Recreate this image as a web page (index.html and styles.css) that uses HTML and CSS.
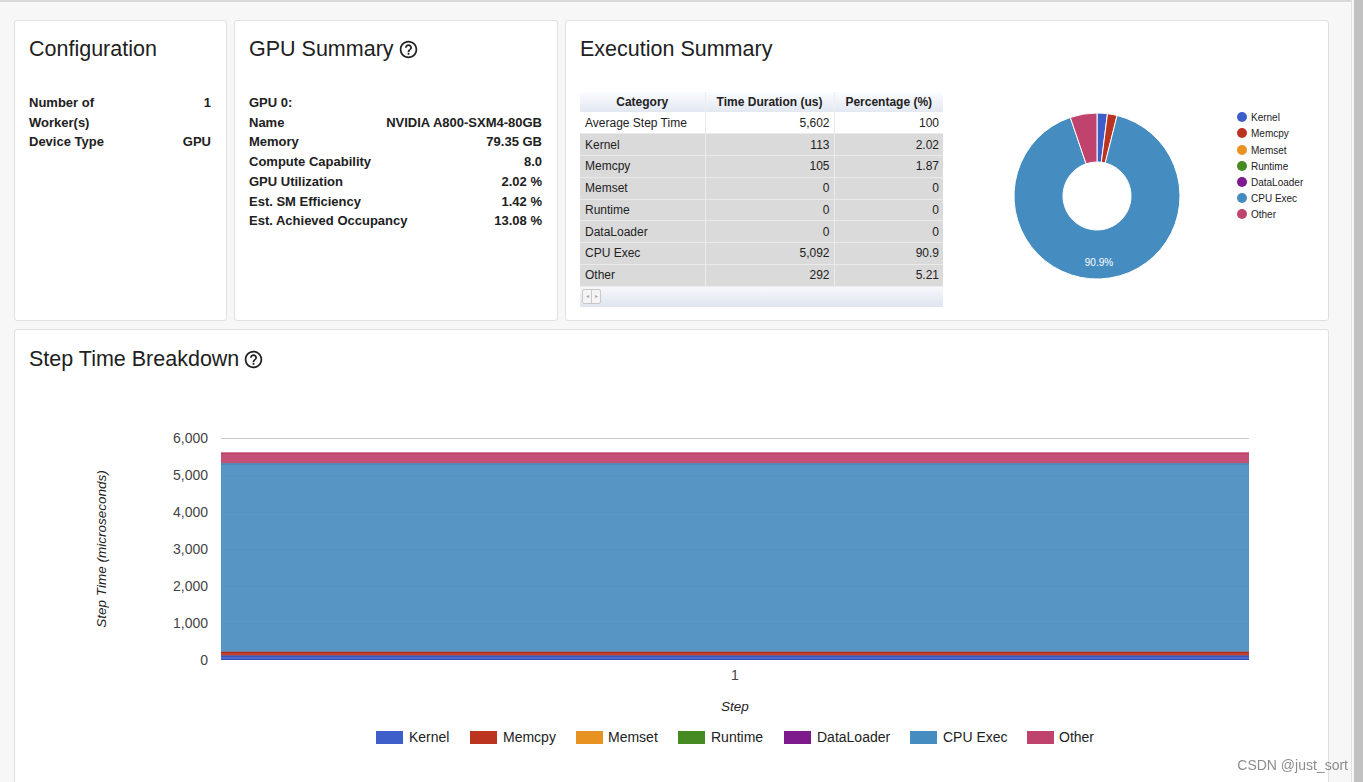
FILE: index.html
```html
<!DOCTYPE html>
<html lang="en">
<head>
<meta charset="utf-8">
<title>Overview</title>
<link rel="stylesheet" href="styles.css">
</head>
<body>
<div class="app">
  <main class="page">
    <div class="row-top">
      <section class="card card-config">
        <h2 class="card-title">Configuration</h2>
        <div class="kv">
          <div class="kv-row"><span class="k k-narrow">Number of Worker(s)</span><span class="v">1</span></div>
          <div class="kv-row"><span class="k">Device Type</span><span class="v">GPU</span></div>
        </div>
      </section>

      <section class="card card-gpu">
        <h2 class="card-title">GPU Summary<svg class="help" viewBox="0 0 24 24"><path d="M11 18h2v-2h-2v2zm1-16C6.48 2 2 6.48 2 12s4.48 10 10 10 10-4.48 10-10S17.52 2 12 2zm0 18c-4.41 0-8-3.59-8-8s3.59-8 8-8 8 3.59 8 8-3.59 8-8 8zm0-14c-2.21 0-4 1.79-4 4h2c0-1.1.9-2 2-2s2 .9 2 2c0 2-3 1.75-3 5h2c0-2.25 3-2.5 3-5 0-2.21-1.79-4-4-4z"/></svg></h2>
        <div class="kv">
          <div class="kv-row"><span class="k">GPU 0:</span><span class="v"></span></div>
          <div class="kv-row"><span class="k">Name</span><span class="v">NVIDIA A800-SXM4-80GB</span></div>
          <div class="kv-row"><span class="k">Memory</span><span class="v">79.35 GB</span></div>
          <div class="kv-row"><span class="k">Compute Capability</span><span class="v">8.0</span></div>
          <div class="kv-row"><span class="k">GPU Utilization</span><span class="v">2.02 %</span></div>
          <div class="kv-row"><span class="k">Est. SM Efficiency</span><span class="v">1.42 %</span></div>
          <div class="kv-row"><span class="k">Est. Achieved Occupancy</span><span class="v">13.08 %</span></div>
        </div>
      </section>

      <section class="card card-exec">
        <h2 class="card-title">Execution Summary</h2>
        <div class="exec-body">
          <div class="gtable">
            <table class="gt">
              <thead>
                <tr><th class="c1">Category</th><th class="c2">Time Duration (us)</th><th class="c3">Percentage (%)</th></tr>
              </thead>
              <tbody>
                <tr class="first"><td>Average Step Time</td><td class="num">5,602</td><td class="num">100</td></tr>
                <tr><td>Kernel</td><td class="num">113</td><td class="num">2.02</td></tr>
                <tr><td>Memcpy</td><td class="num">105</td><td class="num">1.87</td></tr>
                <tr><td>Memset</td><td class="num">0</td><td class="num">0</td></tr>
                <tr><td>Runtime</td><td class="num">0</td><td class="num">0</td></tr>
                <tr><td>DataLoader</td><td class="num">0</td><td class="num">0</td></tr>
                <tr><td>CPU Exec</td><td class="num">5,092</td><td class="num">90.9</td></tr>
                <tr><td>Other</td><td class="num">292</td><td class="num">5.21</td></tr>
              </tbody>
            </table>
            <div class="gt-footer">
              <div class="pager"><span class="pg-btn">&#9666;</span><span class="pg-btn">&#9656;</span></div>
            </div>
          </div>
          <svg class="pie" width="380" height="230" viewBox="0 0 380 230">
            <g transform="translate(154,104)" stroke="#fff" stroke-width="1">
              <path fill="#3e5fc9" d="M0,-83 A83,83 0 0 1 10.49,-82.33 L4.30,-33.73 A34,34 0 0 0 0,-34 Z"/>
              <path fill="#bb3420" d="M10.49,-82.33 A83,83 0 0 1 20.09,-80.53 L8.23,-32.99 A34,34 0 0 0 4.30,-33.73 Z"/>
              <path fill="#458dc0" d="M20.09,-80.53 A83,83 0 1 1 -26.70,-78.59 L-10.94,-32.19 A34,34 0 1 0 8.23,-32.99 Z"/>
              <path fill="#c0436e" d="M-26.70,-78.59 A83,83 0 0 1 0,-83 L0,-34 A34,34 0 0 0 -10.94,-32.19 Z"/>
            </g>
            <text class="pie-label" x="156" y="173.5">90.9%</text>
            <g class="pie-legend">
              <circle cx="299" cy="25" r="5" fill="#3e5fc9"/><text x="308" y="28.5">Kernel</text>
              <circle cx="299" cy="41" r="5" fill="#bb3420"/><text x="308" y="44.5">Memcpy</text>
              <circle cx="299" cy="58" r="5" fill="#e89222"/><text x="308" y="61.5">Memset</text>
              <circle cx="299" cy="74" r="5" fill="#468a22"/><text x="308" y="77.5">Runtime</text>
              <circle cx="299" cy="90" r="5" fill="#7d1a8c"/><text x="308" y="93.5">DataLoader</text>
              <circle cx="299" cy="106" r="5" fill="#458dc0"/><text x="308" y="109.5">CPU Exec</text>
              <circle cx="299" cy="122" r="5" fill="#c0436e"/><text x="308" y="125.5">Other</text>
            </g>
          </svg>
        </div>
      </section>
    </div>

    <section class="card card-step">
      <h2 class="card-title">Step Time Breakdown<svg class="help" viewBox="0 0 24 24"><path d="M11 18h2v-2h-2v2zm1-16C6.48 2 2 6.48 2 12s4.48 10 10 10 10-4.48 10-10S17.52 2 12 2zm0 18c-4.41 0-8-3.59-8-8s3.59-8 8-8 8 3.59 8 8-3.59 8-8 8zm0-14c-2.21 0-4 1.79-4 4h2c0-1.1.9-2 2-2s2 .9 2 2c0 2-3 1.75-3 5h2c0-2.25 3-2.5 3-5 0-2.21-1.79-4-4-4z"/></svg></h2>
      <svg class="step-chart" width="1284" height="400" viewBox="0 0 1284 400">
        <g class="grid" stroke="#cccccc" stroke-width="1">
          <line x1="192" y1="58.5" x2="1220" y2="58.5"/>
          <line x1="192" y1="95.5" x2="1220" y2="95.5"/>
          <line x1="192" y1="132.5" x2="1220" y2="132.5"/>
          <line x1="192" y1="169.5" x2="1220" y2="169.5"/>
          <line x1="192" y1="206.5" x2="1220" y2="206.5"/>
          <line x1="192" y1="243.5" x2="1220" y2="243.5"/>
        </g>
        <g fill-opacity="0.93">
          <rect x="192" y="72.7" width="1028" height="10.8" fill="#c0436e"/>
          <rect x="192" y="83.5" width="1028" height="188.4" fill="#4a8dc0"/>
          <rect x="192" y="271.9" width="1028" height="3.9" fill="#bb3420"/>
          <rect x="192" y="275.8" width="1028" height="4.2" fill="#3e5fc9"/>
        </g>
        <g stroke-width="1.2" fill="none">
          <line x1="192" y1="73.2" x2="1220" y2="73.2" stroke="#b83a66"/>
          <line x1="192" y1="83.8" x2="1220" y2="83.8" stroke="#3f80b4"/>
          <line x1="192" y1="272.3" x2="1220" y2="272.3" stroke="#a82d1a"/>
          <line x1="192" y1="276.2" x2="1220" y2="276.2" stroke="#3452b5"/>
          <line x1="192" y1="279.5" x2="1220" y2="279.5" stroke="#3452b5"/>
        </g>
        <g class="ylabels">
          <text x="179" y="63">6,000</text>
          <text x="179" y="100">5,000</text>
          <text x="179" y="137">4,000</text>
          <text x="179" y="174">3,000</text>
          <text x="179" y="211">2,000</text>
          <text x="179" y="248">1,000</text>
          <text x="179" y="285">0</text>
        </g>
        <text class="xlabel" x="706" y="300">1</text>
        <text class="axis-title" x="706" y="331">Step</text>
        <text class="axis-title" transform="translate(77,169) rotate(-90)">Step Time (microseconds)</text>
        <g class="legend">
          <rect x="347" y="351" width="27" height="13" fill="#3e5fc9"/><text x="380" y="362">Kernel</text>
          <rect x="441" y="351" width="27" height="13" fill="#bb3420"/><text x="474" y="362">Memcpy</text>
          <rect x="547" y="351" width="27" height="13" fill="#e89222"/><text x="579" y="362">Memset</text>
          <rect x="649" y="351" width="27" height="13" fill="#468a22"/><text x="682" y="362">Runtime</text>
          <rect x="755" y="351" width="27" height="13" fill="#7d1a8c"/><text x="788" y="362">DataLoader</text>
          <rect x="881" y="351" width="27" height="13" fill="#458dc0"/><text x="914" y="362">CPU Exec</text>
          <rect x="998" y="351" width="27" height="13" fill="#c0436e"/><text x="1030" y="362">Other</text>
        </g>
      </svg>
    </section>
  </main>
  <div class="scrollbar"><div class="scroll-thumb"></div></div>
</div>
<div class="watermark">CSDN @just_sort</div>
</body>
</html>
```

FILE: styles.css
```css
html, body {
  margin: 0;
  padding: 0;
  height: 100%;
}

body {
  font-family: "Liberation Sans", Arial, Helvetica, sans-serif;
  background: #f7f7f7;
  color: #212121;
  overflow: hidden;
}

.app {
  display: flex;
  height: 782px;
  box-sizing: border-box;
  border-top: 2px solid #d9d9d9;
}

.page {
  flex: 1;
  padding: 18px 0 0 14px;
  min-width: 0;
}

.row-top {
  display: flex;
  gap: 7px;
}

.card {
  box-sizing: border-box;
  background: #fff;
  border: 1px solid #e0e0e0;
  border-radius: 3px;
  padding: 16px 15px 0 14px;
}

.card-config { width: 213px; height: 301px; }
.card-gpu { width: 324px; height: 301px; }
.card-exec { width: 764px; height: 301px; }

.card-step {
  width: 1315px;
  height: 480px;
  margin-top: 8px;
}

.card-title {
  margin: 0;
  font-size: 21.5px;
  font-weight: 400;
  line-height: 24px;
  color: #212121;
  display: flex;
  align-items: center;
}

.card-step .card-title {
  padding-top: 1px;
}

.help {
  width: 21px;
  height: 21px;
  margin-left: 4px;
  fill: #212121;
}

/* key / value lists */
.kv {
  margin-top: 32px;
  font-size: 13px;
  font-weight: 700;
  color: #212121;
}

.kv-row {
  display: flex;
  justify-content: space-between;
  align-items: flex-start;
  gap: 8px;
  line-height: 19.7px;
}

.kv .k { white-space: nowrap; }
.kv .k-narrow { white-space: normal; width: 100px; }
.kv .v { text-align: right; white-space: nowrap; }

/* execution summary */
.exec-body {
  display: flex;
  align-items: flex-start;
  margin-top: 31px;
}

.gtable {
  width: 363px;
  flex: none;
}

.gt {
  width: 363px;
  border-collapse: collapse;
  table-layout: fixed;
  font-size: 12px;
  color: #222;
}

.gt th,
.gt td {
  box-sizing: border-box;
}

.gt th {
  height: 20px;
  padding: 0 4px;
  font-weight: 700;
  text-align: center;
  background: linear-gradient(#fbfcfe, #e2e7f1);
  border-right: 1px solid #eeeeee;
}

.gt th:last-child { border-right: none; }

.gt .c1 { width: 125px; }
.gt .c2 { width: 129px; }
.gt .c3 { width: 109px; }

.gt tbody tr { height: 21.75px; background: #dadada; }
.gt tbody tr.first { background: #ffffff; }

.gt td {
  padding: 0 4px 0 5px;
  border: 1px solid #eaeaea;
  border-top: none;
  white-space: nowrap;
}

.gt td:first-child { border-left: none; }
.gt td:last-child { border-right: none; }

.gt td.num { text-align: right; }

.gt-footer {
  height: 20px;
  background: linear-gradient(#f6f8fc, #dfe5ef);
  display: flex;
  align-items: center;
  padding-left: 2px;
}

.pager {
  display: flex;
  height: 13px;
  border: 1px solid #c8c8c8;
  border-radius: 2px;
  background: #f4f4f4;
}

.pg-btn {
  width: 8px;
  font-size: 6px;
  line-height: 13px;
  text-align: center;
  color: #aaa;
}

.pg-btn + .pg-btn { border-left: 1px solid #c8c8c8; }

.pie { flex: none; display: block; }

.pie-label {
  font-size: 10px;
  fill: #ffffff;
  text-anchor: middle;
}

.pie-legend text {
  font-size: 10px;
  fill: #222;
}

/* step chart */
.step-chart {
  display: block;
  margin-top: 9px;
  font-family: "Liberation Sans", Arial, sans-serif;
}

.ylabels text {
  font-size: 14px;
  fill: #444;
  text-anchor: end;
}

.xlabel {
  font-size: 14px;
  fill: #444;
  text-anchor: middle;
}

.axis-title {
  font-size: 13.5px;
  font-style: italic;
  fill: #222;
  text-anchor: middle;
}

.legend text {
  font-size: 14px;
  fill: #222;
}

/* scrollbar strip */
.scrollbar {
  width: 12px;
  flex: none;
  box-sizing: border-box;
  border-left: 1px solid #e2e2e2;
  background: #f7f7f7;
  display: flex;
  justify-content: flex-end;
  margin-top: -2px;
}

.scroll-thumb {
  width: 9px;
  background: #c1c1c1;
}

.watermark {
  position: fixed;
  right: 15px;
  bottom: 9px;
  font-size: 14px;
  line-height: 16px;
  color: rgba(120, 120, 120, 0.85);
}
```
